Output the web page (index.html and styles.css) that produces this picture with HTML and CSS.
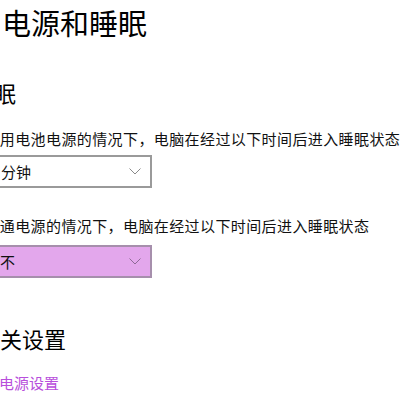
FILE: index.html
```html
<!DOCTYPE html>
<html lang="zh-CN">
<head>
    <meta charset="UTF-8">
    <meta name="viewport" content="width=device-width, initial-scale=1.0">
    <title>电源和睡眠</title>
    <link rel="stylesheet" href="styles.css">
</head>
<body>
    <div class="page">
        <h1 class="page-title">电源和睡眠</h1>

        <h2 class="section-title sleep-title">睡眠</h2>
        <p class="setting-label">在使用电池电源的情况下，电脑在经过以下时间后进入睡眠状态</p>
        <div class="dropdown dropdown-battery">
            <span class="dropdown-value">15 分钟</span>
            <svg class="chevron" width="12" height="7" viewBox="0 0 12 7">
                <polyline points="0.5,0.5 6,6 11.5,0.5" fill="none" stroke="currentColor" stroke-width="1"/>
            </svg>
        </div>

        <p class="setting-label label-second">在接通电源的情况下，电脑在经过以下时间后进入睡眠状态</p>
        <div class="dropdown dropdown-selected">
            <span class="dropdown-value">从不</span>
            <svg class="chevron" width="12" height="7" viewBox="0 0 12 7">
                <polyline points="0.5,0.5 6,6 11.5,0.5" fill="none" stroke="currentColor" stroke-width="1"/>
            </svg>
        </div>

        <h2 class="section-title related-title">相关设置</h2>
        <a class="setting-link" href="#">其他电源设置</a>
    </div>
</body>
</html>
```

FILE: styles.css
```css
body {
    margin: 0;
    background-color: #fff;
    font-family: "Noto Sans CJK SC", "Noto Sans", sans-serif;
    color: #111;
    overflow: hidden;
}
.page {
    margin-left: -31px;
    padding-top: 2px;
}
.page-title {
    margin: 0 0 0 33px;
    font-size: 29px;
    font-weight: normal;
    line-height: 40px;
    color: #000;
}
.section-title {
    margin: 0;
    font-size: 22px;
    font-weight: normal;
    line-height: 30px;
    color: #000;
}
.sleep-title {
    margin-top: 35px;
    margin-left: 3px;
}
.setting-label {
    margin: 22px 0 0 0;
    font-size: 15px;
    line-height: 20px;
    letter-spacing: 0.4px;
    color: #111;
    white-space: nowrap;
}
.label-second {
    margin-top: 28px;
}
.dropdown {
    margin-top: 6px;
    width: 183px;
    height: 33px;
    box-sizing: border-box;
    border: 2px solid #9a9a9a;
    background-color: #fff;
    display: flex;
    align-items: center;
    justify-content: space-between;
    padding: 0 9px 0 14px;
    font-size: 15px;
    color: #111;
}
.dropdown-battery {
    padding-left: 10px;
}
.chevron {
    color: #8a8a8a;
}
.dropdown-selected {
    margin-top: 9px;
    background-color: #e3a7ec;
    border-color: #a68fac;
}
.dropdown-selected .chevron {
    color: #8e6a96;
}
.related-title {
    margin-top: 45px;
    margin-left: 9px;
}
.setting-link {
    display: block;
    margin-top: 20px;
    font-size: 15px;
    line-height: 20px;
    color: #b84fdc;
    text-decoration: none;
}
```
